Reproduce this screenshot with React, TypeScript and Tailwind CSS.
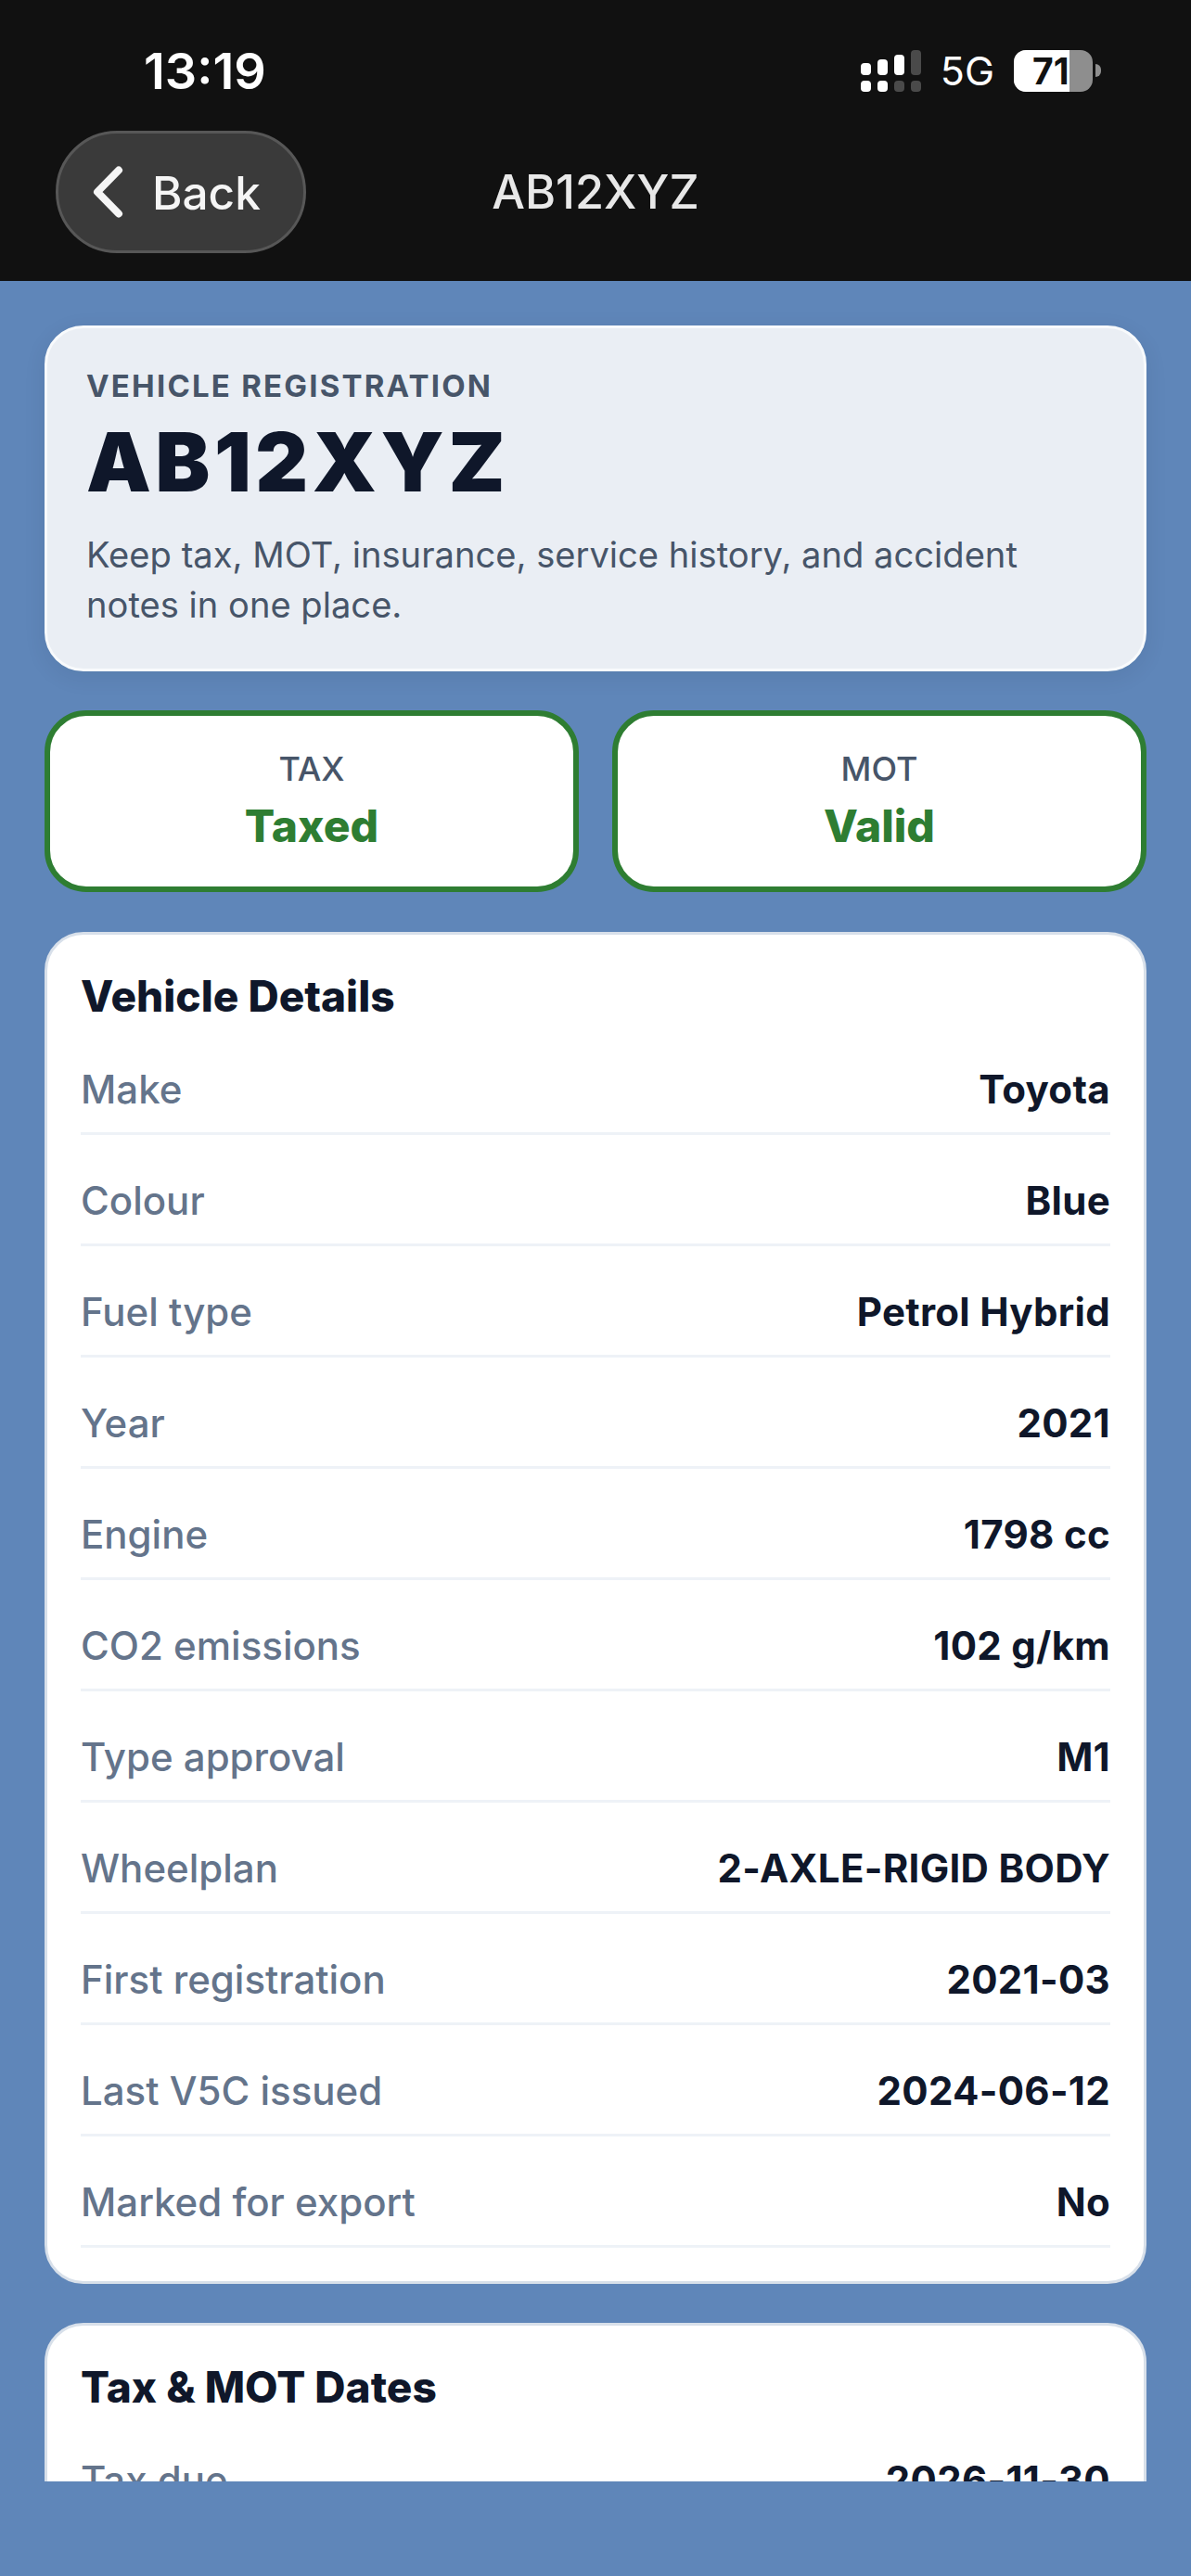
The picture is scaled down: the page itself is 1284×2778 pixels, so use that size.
const detailRows = [
  ["Make", "Toyota"],
  ["Colour", "Blue"],
  ["Fuel type", "Petrol Hybrid"],
  ["Year", "2021"],
  ["Engine", "1798 cc"],
  ["CO2 emissions", "102 g/km"],
  ["Type approval", "M1"],
  ["Wheelplan", "2-AXLE-RIGID BODY"],
  ["First registration", "2021-03"],
  ["Last V5C issued", "2024-06-12"],
  ["Marked for export", "No"],
];

function SignalIcon() {
  return (
    <svg width="65" height="45" viewBox="0 0 65 45" className="block">
      <rect x="0" y="14" width="11" height="13" rx="4" fill="#fff" />
      <rect x="18" y="10" width="11" height="17" rx="4" fill="#fff" />
      <rect x="36" y="5" width="11" height="22" rx="4" fill="#fff" />
      <rect x="54" y="0" width="11" height="27" rx="4" fill="#4a4a4a" />
      <rect x="0" y="33" width="11" height="12" rx="4" fill="#fff" />
      <rect x="18" y="33" width="11" height="12" rx="4" fill="#fff" />
      <rect x="36" y="33" width="11" height="12" rx="4" fill="#4a4a4a" />
      <rect x="54" y="33" width="11" height="12" rx="4" fill="#4a4a4a" />
    </svg>
  );
}

function Battery() {
  return (
    <div className="flex items-center gap-[3px]">
      <div className="relative flex h-[45px] w-[85px] items-center overflow-hidden rounded-[13px] bg-[#8e8e8e]">
        <div className="h-full w-[60px] bg-white" />
        <span className="absolute left-[20px] top-0 w-[40px] overflow-hidden text-[39px] font-bold leading-[45px] text-[#111111]">71</span>
      </div>
      <div className="h-[14px] w-[6px] rounded-r-full bg-[#8e8e8e]" />
    </div>
  );
}

function Row({ label, value }: { label: string; value: string }) {
  return (
    <div className="flex h-[120px] items-center justify-between border-b-[3px] border-[#eef2f7] pt-[24px]">
      <span className="text-[42px] font-medium text-[#64748b]">{label}</span>
      <span className="text-[42px] font-bold tracking-[0.3px] text-[#0f172a]">{value}</span>
    </div>
  );
}

function StatusCard({ label, value }: { label: string; value: string }) {
  return (
    <div className="flex h-[196px] flex-1 flex-col items-center justify-center rounded-[45px] border-[6px] border-[#2e7d32] bg-white">
      <span className="text-[36px] font-medium leading-[44px] text-[#475569]">{label}</span>
      <span className="mt-[10px] text-[48px] font-extrabold leading-[60px] text-[#2e7d32]">{value}</span>
    </div>
  );
}

export default function App() {
  return (
    <div className="h-[2778px] w-[1284px] overflow-hidden bg-[#5f86b9] font-['Inter',sans-serif]">
      <header className="h-[303px] bg-[#111111]">
        <div className="flex h-[141px] items-start justify-between pl-[155px] pr-[97px] pt-[46px]">
          <span className="text-[54px] font-semibold leading-[62px] text-white">13:19</span>
          <div className="flex items-center gap-[21px] pt-[7px]">
            <SignalIcon />
            <span className="text-[43px] font-normal leading-[46px] text-white">5G</span>
            <Battery />
          </div>
        </div>
        <div className="relative flex h-[132px] items-center justify-center">
          <button className="absolute left-[60px] top-0 flex h-[132px] w-[270px] items-center gap-[27px] rounded-full border-[3px] border-[#575757] bg-[#3a3a3a] pl-[34px]">
            <svg width="40" height="60" viewBox="0 0 40 60" fill="none" className="shrink-0">
              <path d="M31 6.5 L8 30 L31 53.5" stroke="#f5f5f5" strokeWidth="8" strokeLinecap="round" strokeLinejoin="round" />
            </svg>
            <span className="pt-[2px] text-[49.5px] font-medium leading-[60px] text-[#f5f5f5]">Back</span>
          </button>
          <span className="text-[50.4px] font-medium text-[#e8e8e8]">AB12XYZ</span>
        </div>
      </header>

      <main className="h-[2373px] overflow-hidden px-[48px] pt-[48px]">
        <section className="h-[373px] rounded-[42px] border-[3px] border-[#f8fafc] bg-[#eaeef4] px-[42px] pt-[40px] shadow-[0_6px_24px_rgba(15,23,42,0.08)]">
          <p className="text-[33px] font-bold leading-[44px] tracking-[2.2px] text-[#475569]">VEHICLE REGISTRATION</p>
          <p className="mt-[6px] text-[88px] font-black leading-[108px] tracking-[4.6px] text-[#0f172a]">AB12XYZ</p>
          <p className="mt-[19px] text-[38.13px] leading-[54px] text-[#475569]">
            Keep tax, MOT, insurance, service history, and accident notes in one place.
          </p>
        </section>

        <div className="mt-[42px] flex gap-[36px]">
          <StatusCard label="TAX" value="Taxed" />
          <StatusCard label="MOT" value="Valid" />
        </div>

        <section className="mt-[43px] rounded-[42px] border-[3px] border-[#d8e0ea] bg-white px-[36px] pb-[36px] pt-[36px]">
          <h2 className="text-[46px] font-extrabold leading-[60px] text-[#0f172a]">Vehicle Details</h2>
          {detailRows.map(([label, value]) => (
            <Row key={label} label={label} value={value} />
          ))}
        </section>

        <section className="mt-[42px] rounded-[42px] border-[3px] border-[#d8e0ea] bg-white px-[36px] pt-[36px]">
          <h2 className="text-[46px] font-extrabold leading-[60px] text-[#0f172a]">Tax &amp; MOT Dates</h2>
          <Row label="Tax due" value="2026-11-30" />
        </section>
      </main>
    </div>
  );
}
